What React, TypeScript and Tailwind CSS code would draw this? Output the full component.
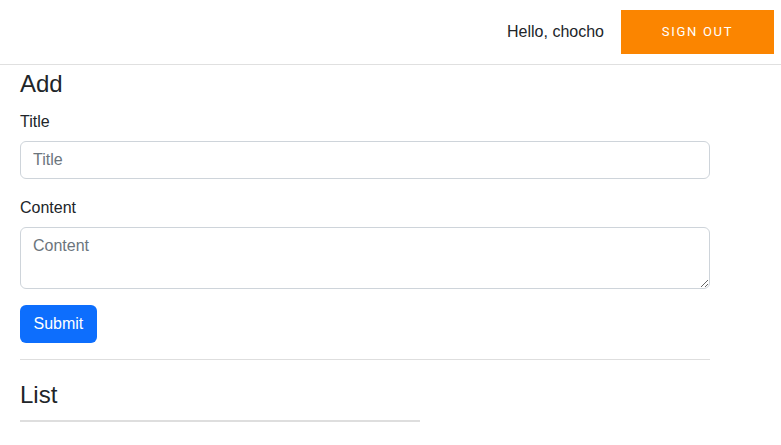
import React from "react";

export default function App() {
  return (
    <div className="min-h-[445px] bg-white text-[#212529]" style={{ fontFamily: '"Liberation Sans", Arial, sans-serif' }}>
      <header className="flex h-[65px] items-center justify-end border-b border-[#e0e0e0] pr-[7px]">
        <span className="mr-[17px] text-[16px] leading-6 text-[#212529]">Hello, chocho</span>
        <button
          className="h-[44px] w-[153px] bg-[#fb8500] text-[13px] uppercase tracking-[1.7px] text-white"
          style={{ fontFamily: "Roboto, sans-serif" }}
        >
          Sign out
        </button>
      </header>
      <main className="px-5 pt-[5px]">
        <div className="w-[690px]">
          <h4 className="mb-[11px] text-[24px] leading-[1.2] font-normal">Add</h4>
          <form onSubmit={(e) => e.preventDefault()}>
            <div className="mb-[17px]">
              <label className="mb-[7px] block text-[16px] leading-6">Title</label>
              <input
                placeholder="Title"
                className="block h-[38px] w-full rounded-[6px] border border-[#ced4da] px-3 py-1.5 text-[16px] leading-6 placeholder:text-[#6c757d] outline-none"
              />
            </div>
            <div className="mb-4">
              <label className="mb-[7px] block text-[16px] leading-6">Content</label>
              <textarea
                placeholder="Content"
                rows={2}
                className="block h-[62px] w-full rounded-[6px] border border-[#ced4da] px-3 py-1.5 text-[16px] leading-6 placeholder:text-[#6c757d] outline-none"
              />
            </div>
            <button className="h-[38px] rounded-[6px] bg-[#0d6efd] px-[13.5px] text-[16px] leading-6 text-white">Submit</button>
          </form>
          <hr className="mt-4 mb-[21px] border-t border-[#dedede]" />
          <h4 className="mb-[10px] text-[24px] leading-[1.2] font-normal">List</h4>
        </div>
        <div className="h-[2px] w-[400px] bg-[#dedede]" />
      </main>
    </div>
  );
}
